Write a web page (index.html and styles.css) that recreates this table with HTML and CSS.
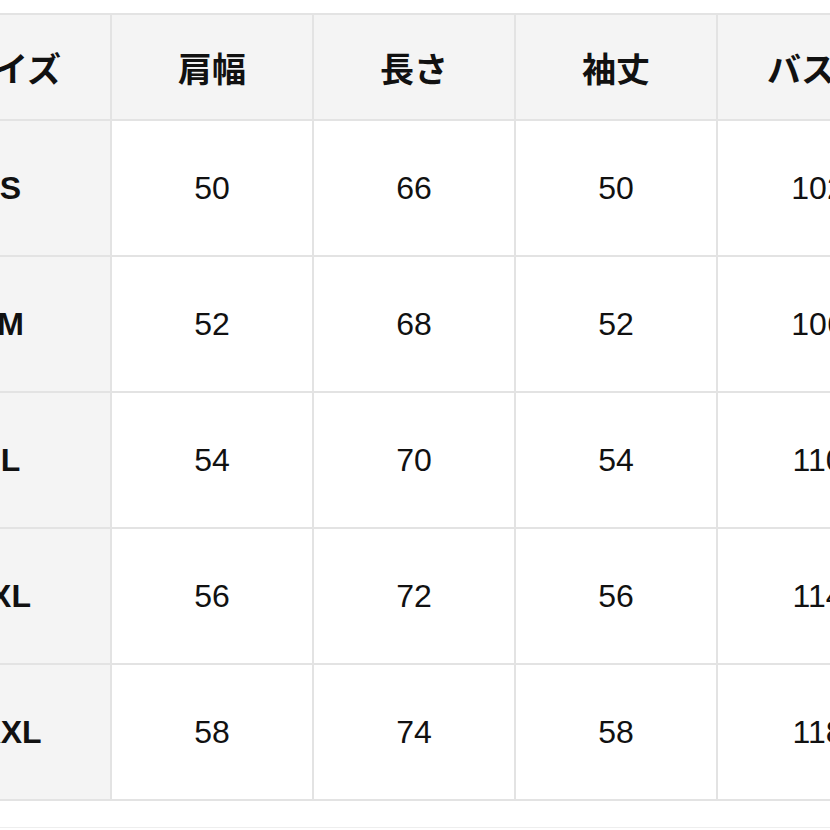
FILE: index.html
```html
<!DOCTYPE html>
<html lang="ja">
<head>
<meta charset="utf-8">
<link rel="stylesheet" href="styles.css">
</head>
<body>
<div class="page">
  <table class="size-table">
    <colgroup>
      <col class="c-first"><col class="c-data"><col class="c-data"><col class="c-data"><col class="c-data">
    </colgroup>
    <thead>
      <tr class="head-row">
        <th>サイズ</th><th>肩幅</th><th>長さ</th><th>袖丈</th><th>バスト</th>
      </tr>
    </thead>
    <tbody>
      <tr><th>S</th><td>50</td><td>66</td><td>50</td><td>102</td></tr>
      <tr><th>M</th><td>52</td><td>68</td><td>52</td><td>106</td></tr>
      <tr><th>L</th><td>54</td><td>70</td><td>54</td><td>110</td></tr>
      <tr><th>XL</th><td>56</td><td>72</td><td>56</td><td>114</td></tr>
      <tr><th>XXL</th><td>58</td><td>74</td><td>58</td><td>118</td></tr>
    </tbody>
  </table>
  <div class="next-block"></div>
</div>
</body>
</html>
```

FILE: styles.css
```css
html, body {
  margin: 0;
  padding: 0;
  background: #ffffff;
}
.page {
  width: 830px;
  height: 830px;
  overflow: hidden;
  padding-top: 13px;
  box-sizing: border-box;
}
.size-table {
  border-collapse: collapse;
  table-layout: fixed;
  width: 1009px;
  margin-left: -91px;
  font-family: "Liberation Sans", "Noto Sans CJK JP", sans-serif;
  font-size: 32px;
  color: #111111;
}
.c-first { width: 201px; }
.c-data { width: 202px; }
.size-table th,
.size-table td {
  border: 2px solid #e3e3e3;
  text-align: center;
  vertical-align: middle;
  padding: 0;
}
.size-table th {
  font-weight: bold;
  background: #f4f4f4;
}
.size-table td {
  background: #ffffff;
  font-weight: normal;
}
.head-row th {
  height: 104px;
  font-size: 34px;
}
.size-table tbody tr {
  height: 136px;
}
.next-block {
  margin-top: 26px;
  border-top: 1px solid #eeeeee;
  height: 10px;
}
```
